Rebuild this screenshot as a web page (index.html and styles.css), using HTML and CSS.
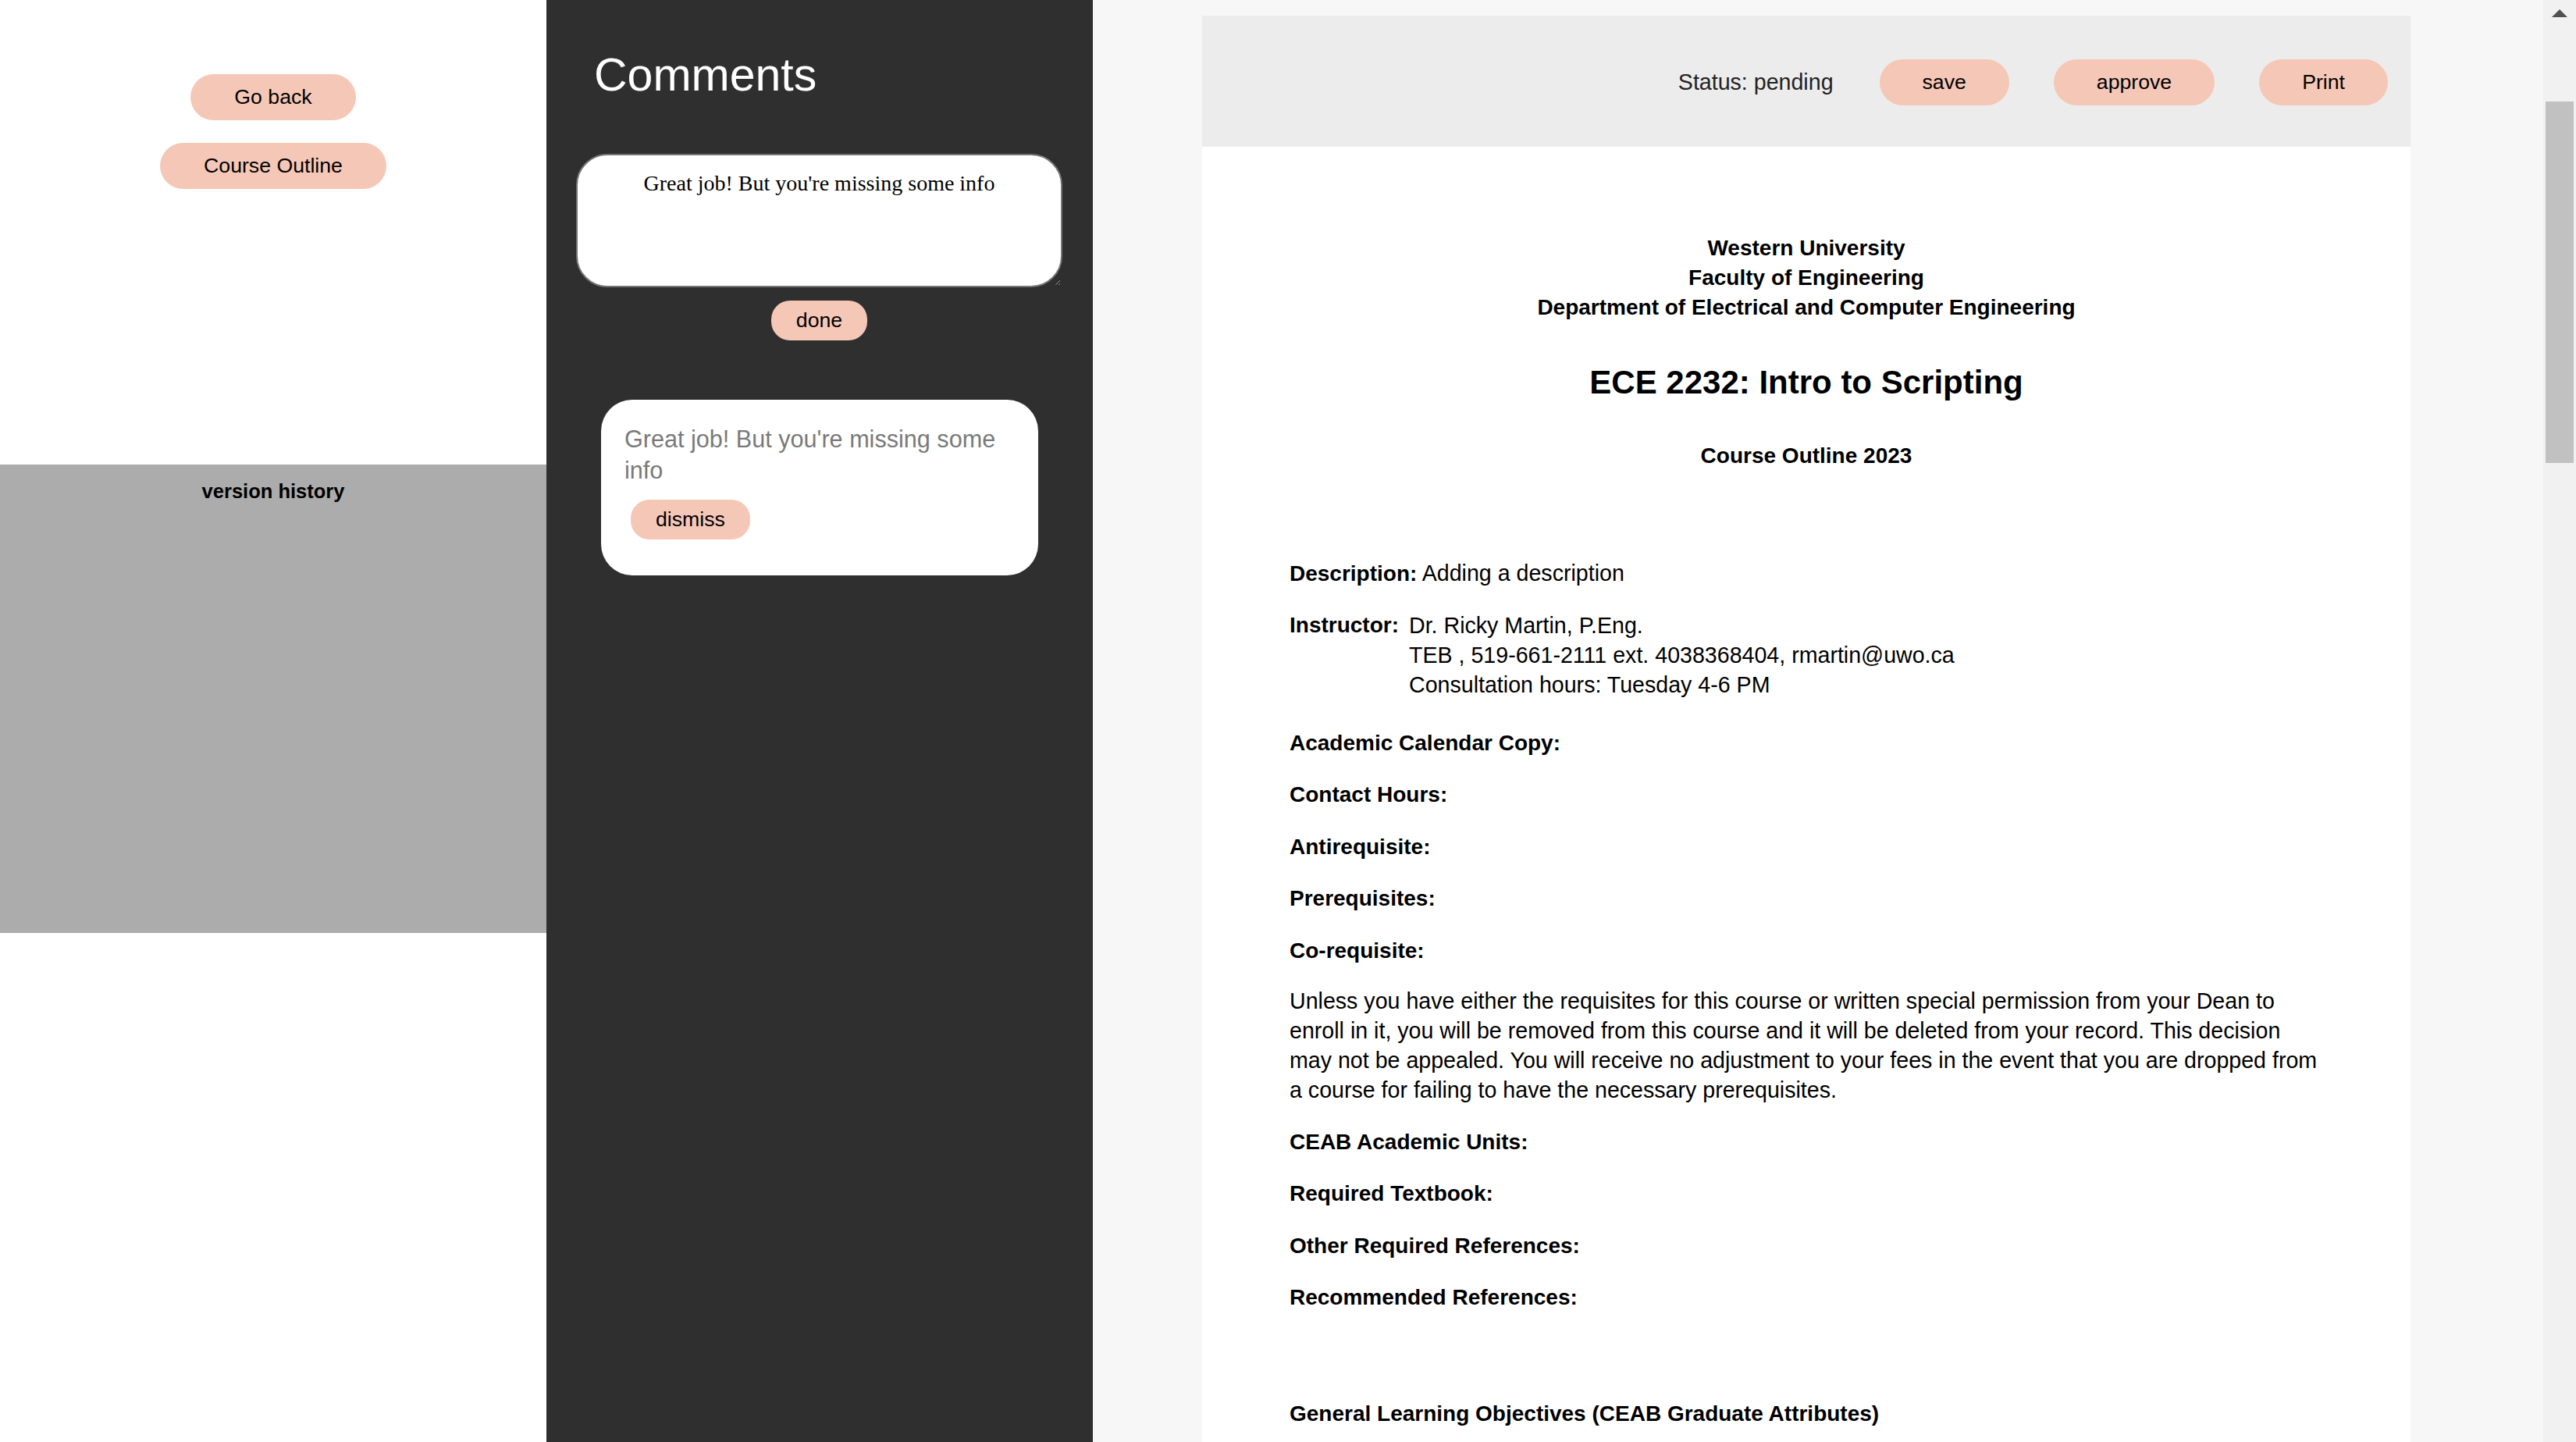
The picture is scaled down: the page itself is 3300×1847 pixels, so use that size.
FILE: index.html
```html
<!DOCTYPE html>
<html lang="en">
<head>
<meta charset="utf-8">
<title>Course Outline Review</title>
<link rel="stylesheet" href="styles.css">
</head>
<body>
<div class="app">
  <aside class="sidebar">
    <nav class="nav">
      <button class="pill">Go back</button>
      <button class="pill">Course Outline</button>
    </nav>
    <section class="history">
      <h4 class="history-title">version history</h4>
    </section>
  </aside>

  <aside class="comments">
    <h1 class="comments-title">Comments</h1>
    <div class="composer">
      <textarea class="comment-input">Great job! But you're missing some info</textarea>
      <button class="pill pill-small">done</button>
    </div>
    <div class="comment-card">
      <p class="comment-text">Great job! But you're missing some info</p>
      <button class="pill pill-small dismiss">dismiss</button>
    </div>
  </aside>

  <main class="main">
    <article class="doc">
      <header class="toolbar">
        <span class="status">Status: pending</span>
        <button class="pill">save</button>
        <button class="pill">approve</button>
        <button class="pill">Print</button>
      </header>
      <div class="doc-body">
        <div class="titles">
          <p class="institution">Western University<br>Faculty of Engineering<br>Department of Electrical and Computer Engineering</p>
          <h2 class="course-title">ECE 2232: Intro to Scripting</h2>
          <h3 class="course-sub">Course Outline 2023</h3>
        </div>

        <p class="field first"><b class="label">Description:</b> Adding a description</p>

        <div class="field instructor">
          <b class="label">Instructor:</b>
          <div class="instructor-info">
            <div>Dr. Ricky Martin, P.Eng.</div>
            <div>TEB , 519-661-2111 ext. 4038368404, rmartin@uwo.ca</div>
            <div>Consultation hours: Tuesday 4-6 PM</div>
          </div>
        </div>

        <p class="field"><b class="label">Academic Calendar Copy:</b></p>
        <p class="field"><b class="label">Contact Hours:</b></p>
        <p class="field"><b class="label">Antirequisite:</b></p>
        <p class="field"><b class="label">Prerequisites:</b></p>
        <p class="field"><b class="label">Co-requisite:</b></p>
        <p class="field note">Unless you have either the requisites for this course or written special permission from your Dean to enroll in it, you will be removed from this course and it will be deleted from your record. This decision may not be appealed. You will receive no adjustment to your fees in the event that you are dropped from a course for failing to have the necessary prerequisites.</p>
        <p class="field"><b class="label">CEAB Academic Units:</b></p>
        <p class="field"><b class="label">Required Textbook:</b></p>
        <p class="field"><b class="label">Other Required References:</b></p>
        <p class="field"><b class="label">Recommended References:</b></p>

        <p class="field section-head"><b class="label">General Learning Objectives (CEAB Graduate Attributes)</b></p>
      </div>
    </article>
  </main>

  <div class="scrollbar">
    <svg class="scroll-arrow" width="20" height="10" viewBox="0 0 20 10"><polygon points="10,0 20,10 0,10" fill="#505050"/></svg>
    <div class="scroll-thumb"></div>
  </div>
</div>
</body>
</html>
```

FILE: styles.css
```css
html, body {
  margin: 0;
  padding: 0;
  height: 100%;
}

body {
  font-family: "Liberation Sans", Arial, sans-serif;
  color: #000;
  background: #fff;
  overflow: hidden;
}

.app {
  display: flex;
  height: 100vh;
  overflow: hidden;
}

/* ---------- shared pill buttons ---------- */
.pill {
  font-family: "Liberation Sans", Arial, sans-serif;
  font-size: 26.67px;
  line-height: 31px;
  color: #000;
  background: #f5c7b7;
  border: none;
  border-radius: 30px;
  padding: 14px 56px;
  margin: 0;
  cursor: pointer;
}

.pill-small {
  padding: 10px 32px;
  border-radius: 24px;
}

/* ---------- left sidebar ---------- */
.sidebar {
  width: 700px;
  flex: none;
  display: flex;
  flex-direction: column;
  background: #fff;
}

.nav {
  height: 595px;
  box-sizing: border-box;
  padding-top: 95px;
  display: flex;
  flex-direction: column;
  align-items: center;
  gap: 29px;
}

.history {
  height: 600px;
  background: #acacac;
  box-sizing: border-box;
  padding-top: 19px;
}

.history-title {
  margin: 0;
  text-align: center;
  font-size: 25.5px;
  line-height: 30px;
  font-weight: 700;
}

/* ---------- comments column ---------- */
.comments {
  width: 700px;
  flex: none;
  background: #2f2f2f;
  box-sizing: border-box;
  padding: 62px 0 0 38px;
}

.comments-title {
  margin: 0 0 67px 23px;
  font-size: 59px;
  line-height: 68px;
  font-weight: 400;
  color: #fff;
}

.composer {
  width: 623px;
  display: flex;
  flex-direction: column;
  align-items: center;
  gap: 17px;
}

.comment-input {
  width: 623px;
  height: 171px;
  box-sizing: border-box;
  border: 2px solid #767676;
  border-radius: 40px;
  padding: 20px 24px;
  font-family: "Liberation Serif", "Times New Roman", serif;
  font-size: 28px;
  color: #000;
  text-align: center;
  background: #fff;
  outline: none;
  resize: both;
}

.comment-card {
  width: 560px;
  box-sizing: border-box;
  margin: 76px 0 0 32px;
  padding: 30px 30px 46px;
  background: #fff;
  border-radius: 40px;
}

.comment-text {
  margin: 0;
  font-size: 30.6px;
  line-height: 40px;
  color: #7a7a7a;
}

.dismiss {
  margin: 18px 0 0 8px;
}

/* ---------- main area ---------- */
.main {
  flex: 1;
  background: #f7f7f7;
  box-sizing: border-box;
  padding: 20px 0 0 140px;
  display: flex;
  flex-direction: column;
  overflow: hidden;
}

.doc {
  width: 1548px;
  flex: 1;
  background: #fff;
  overflow: hidden;
}

.toolbar {
  height: 168px;
  box-sizing: border-box;
  padding: 3px 29px 0;
  background: #ececec;
  display: flex;
  justify-content: flex-end;
  align-items: center;
  gap: 57px;
}

.toolbar .pill {
  padding: 14px 55px;
}

.status {
  font-size: 28.6px;
  color: #222;
  margin-right: 2px;
}

.doc-body {
  padding: 0 112px;
  font-size: 28.6px;
  line-height: 38px;
}

.titles {
  text-align: center;
  padding-top: 111px;
}

.institution {
  margin: 0;
  font-size: 28px;
  line-height: 38px;
  font-weight: 700;
}

.course-title {
  margin: 48px 0 0;
  font-size: 42px;
  line-height: 57px;
  font-weight: 700;
}

.course-sub {
  margin: 47px 0 0;
  font-size: 28px;
  line-height: 38px;
  font-weight: 700;
}

.field {
  margin: 0 0 27.5px;
}

.field.first {
  margin-top: 112px;
}

.field.note {
  margin-top: -1px;
}

.label {
  font-size: 28px;
  font-weight: 700;
}

.instructor {
  display: flex;
  gap: 13px;
  margin-bottom: 36px;
}

.section-head {
  margin-top: 110px;
}

/* ---------- page scrollbar ---------- */
.scrollbar {
  width: 42px;
  flex: none;
  background: #f1f1f1;
  display: flex;
  flex-direction: column;
  align-items: center;
}

.scroll-arrow {
  margin-top: 12px;
  display: block;
}

.scroll-thumb {
  width: 36px;
  height: 463px;
  margin-top: 108px;
  background: #c1c1c1;
}
```
